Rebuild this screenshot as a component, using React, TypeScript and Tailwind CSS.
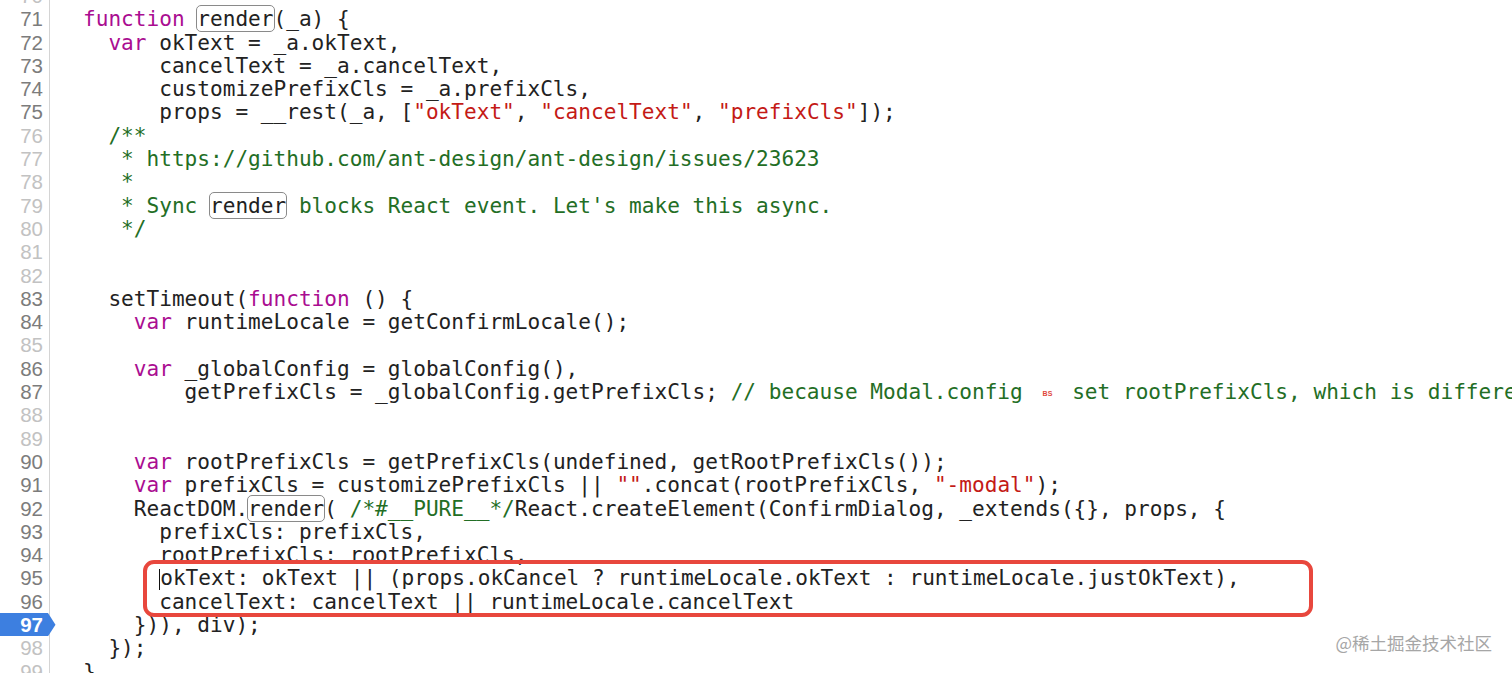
import React from "react";

type Kind = "t" | "k" | "c" | "s" | "box" | "bs" | "caret";
type Tok = [string, Kind];

const KIND_CLASS: Record<Kind, string> = {
  t: "text-[#222222]",
  k: "text-[#aa0d91]",
  c: "text-[#236e25]",
  s: "text-[#c41a16]",
  box: "text-[#222222] rounded-[4px] outline outline-[1.5px] outline-[#8a8a8a]",
  bs: "",
  caret: "",
};

// light = line number shown in the paler grey
type Line = { n: number; toks: Tok[]; light?: boolean };

const lines: Line[] = [
  { n: 70, toks: [], light: true },
  { n: 71, toks: [["  ", "t"], ["function", "k"], [" ", "t"], ["render", "box"], ["(_a) {", "t"]] },
  { n: 72, toks: [["    ", "t"], ["var", "k"], [" okText = _a.okText,", "t"]] },
  { n: 73, toks: [["        cancelText = _a.cancelText,", "t"]] },
  { n: 74, toks: [["        customizePrefixCls = _a.prefixCls,", "t"]] },
  {
    n: 75,
    toks: [
      ["        props = __rest(_a, [", "t"],
      ['"okText"', "s"],
      [", ", "t"],
      ['"cancelText"', "s"],
      [", ", "t"],
      ['"prefixCls"', "s"],
      ["]);", "t"],
    ],
  },
  { n: 76, toks: [["    ", "t"], ["/**", "c"]], light: true },
  { n: 77, toks: [["     ", "t"], ["* https://github.com/ant-design/ant-design/issues/23623", "c"]], light: true },
  { n: 78, toks: [["     ", "t"], ["*", "c"]], light: true },
  {
    n: 79,
    toks: [["     ", "t"], ["* Sync ", "c"], ["render", "box"], [" blocks React event. Let's make this async.", "c"]],
    light: true,
  },
  { n: 80, toks: [["     ", "t"], ["*/", "c"]], light: true },
  { n: 81, toks: [], light: true },
  { n: 82, toks: [], light: true },
  { n: 83, toks: [["    setTimeout(", "t"], ["function", "k"], [" () {", "t"]] },
  { n: 84, toks: [["      ", "t"], ["var", "k"], [" runtimeLocale = getConfirmLocale();", "t"]] },
  { n: 85, toks: [], light: true },
  { n: 86, toks: [["      ", "t"], ["var", "k"], [" _globalConfig = globalConfig(),", "t"]] },
  {
    n: 87,
    toks: [
      ["          getPrefixCls = _globalConfig.getPrefixCls; ", "t"],
      ["// because Modal.config ", "c"],
      ["BS", "bs"],
      [" set rootPrefixCls, which is different from other locations", "c"],
    ],
  },
  { n: 88, toks: [], light: true },
  { n: 89, toks: [], light: true },
  { n: 90, toks: [["      ", "t"], ["var", "k"], [" rootPrefixCls = getPrefixCls(undefined, getRootPrefixCls());", "t"]] },
  {
    n: 91,
    toks: [
      ["      ", "t"],
      ["var", "k"],
      [" prefixCls = customizePrefixCls || ", "t"],
      ['""', "s"],
      [".concat(rootPrefixCls, ", "t"],
      ['"-modal"', "s"],
      [");", "t"],
    ],
  },
  {
    n: 92,
    toks: [
      ["      ReactDOM.", "t"],
      ["render", "box"],
      ["( ", "t"],
      ["/*#__PURE__*/", "c"],
      ["React.createElement(ConfirmDialog, _extends({}, props, {", "t"],
    ],
  },
  { n: 93, toks: [["        prefixCls: prefixCls,", "t"]] },
  { n: 94, toks: [["        rootPrefixCls: rootPrefixCls,", "t"]] },
  {
    n: 95,
    toks: [
      ["        ", "t"],
      ["", "caret"],
      ["okText: okText || (props.okCancel ? runtimeLocale.okText : runtimeLocale.justOkText),", "t"],
    ],
  },
  { n: 96, toks: [["        cancelText: cancelText || runtimeLocale.cancelText", "t"]] },
  { n: 97, toks: [["      })), div);", "t"]] },
  { n: 98, toks: [["    });", "t"]], light: true },
  { n: 99, toks: [["  }", "t"]], light: true },
];

function Token({ tok }: { tok: Tok }) {
  const [text, kind] = tok;
  if (kind === "caret") {
    return <span className="relative inline-block w-0 h-[1em] align-middle border-l-[1.5px] border-[#111]" />;
  }
  if (kind === "bs") {
    return (
      <span className="inline-block w-[24px] text-center align-middle text-[7px] leading-none font-bold text-[#e0483c] font-['Liberation_Sans',sans-serif]">
        {text}
      </span>
    );
  }
  return <span className={KIND_CLASS[kind]}>{text}</span>;
}

function LineNumber({ n, light }: { n: number; light?: boolean }) {
  if (n === 97) {
    return (
      <div className="relative h-[23.31px] w-[56px]">
        <svg className="absolute left-0 top-[0px]" width="56" height="23.31" viewBox="0 0 56 23.31">
          <path d="M0 0 H48 L55.5 11.65 L48 23.31 H0 Z" fill="#3d7fe0" />
        </svg>
        <div className="relative w-[43px] text-right text-white font-semibold">{n}</div>
      </div>
    );
  }
  return (
    <div className={`h-[23.31px] w-[43px] text-right ${light ? "text-[#c2c2c2]" : "text-[#7c7c7c]"}`}>{n}</div>
  );
}

export default function App() {
  return (
    <div className="relative h-[673px] w-[1512px] overflow-hidden bg-white">
      <div className="flex mt-[-16px]">
        <div className="relative w-[50px] shrink-0 font-['Liberation_Sans',sans-serif] text-[20.5px] leading-[23.31px]">
          <div className="absolute left-[49px] top-0 bottom-0 w-px bg-[#d4d4d4]" />
          {lines.map((l) => (
            <LineNumber key={l.n} n={l.n} light={l.light} />
          ))}
        </div>
        <div className="relative flex-1 pl-[7.6px] font-['DejaVu_Sans_Mono',monospace] text-[21.1px] leading-[23.31px] whitespace-pre">
          {lines.map((l) => (
            <div key={l.n} className="h-[23.31px]">
              {l.toks.map((t, i) => (
                <Token key={i} tok={t} />
              ))}
            </div>
          ))}
          <div className="absolute left-[93px] top-[576px] w-[1170px] h-[57px] rounded-[11px] border-[4px] border-[#e8473d]" />
        </div>
      </div>
      <div className="absolute right-[20px] top-[630px] text-[17.5px] text-[#a6a6a6] font-['Noto_Sans_CJK_SC',sans-serif]">
        @稀土掘金技术社区
      </div>
    </div>
  );
}
